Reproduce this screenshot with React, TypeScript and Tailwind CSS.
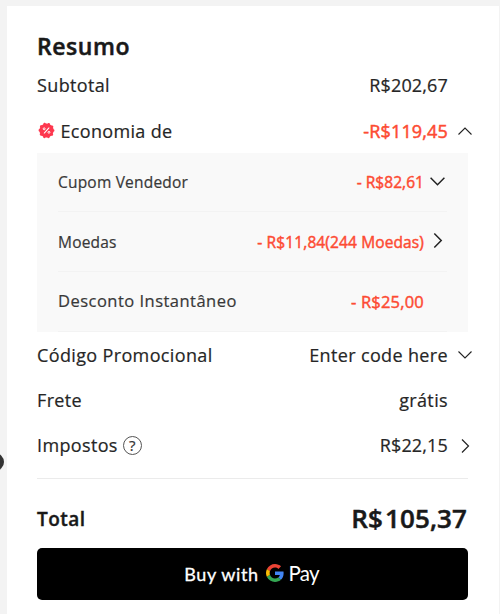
import { useState } from "react";
import clsx from "clsx";

type Direction = "up" | "down" | "right";

const paths: Record<Direction, string> = {
  up: "M1.5 11.5 8 5l6.5 6.5",
  down: "M1.5 4.5 8 11l6.5-6.5",
  right: "M5 1.5 11.5 8 5 14.5",
};

function Chevron({ dir, className }: { dir: Direction; className?: string }) {
  return (
    <svg viewBox="0 0 16 16" fill="none" stroke="#222" className={clsx("shrink-0", className)}>
      <path d={paths[dir]} />
    </svg>
  );
}

/* ── ICONS ── */
function PercentBadge() {
  return (
    <svg width="17" height="17" viewBox="0 0 16 16" className="mb-[1px] ml-[1px] shrink-0">
      <circle cx="8" cy="8" r="6.7" fill="#fd384f" />
      <circle cx="8" cy="8" r="6.3" fill="none" stroke="#fd384f" strokeWidth="2.4" strokeDasharray="0.01 3.948" strokeLinecap="round" />
      <path d="M10.3 5.6 5.9 10.4" stroke="#fff" strokeWidth="1" strokeLinecap="round" />
      <circle cx="5.8" cy="6.4" r="0.9" fill="none" stroke="#fff" strokeWidth="0.9" />
      <circle cx="10.3" cy="9.7" r="0.9" fill="none" stroke="#fff" strokeWidth="0.9" />
    </svg>
  );
}

function HelpIcon() {
  return (
    <span className="ml-[5px] flex size-[19px] items-center justify-center rounded-full border border-[#555] text-[15px] leading-none tracking-normal text-[#333]">
      ?
    </span>
  );
}

function GoogleLogo() {
  return (
    <svg width="18" height="18" viewBox="0 0 48 48" className="shrink-0">
      <path fill="#EA4335" d="M24 9.5c3.54 0 6.71 1.22 9.21 3.6l6.85-6.85C35.9 2.38 30.47 0 24 0 14.62 0 6.51 5.38 2.56 13.22l7.98 6.19C12.43 13.72 17.74 9.5 24 9.5z" />
      <path fill="#4285F4" d="M46.98 24.55c0-1.57-.15-3.09-.38-4.55H24v9.02h12.94c-.58 2.96-2.26 5.48-4.78 7.18l7.73 6c4.51-4.18 7.09-10.36 7.09-17.65z" />
      <path fill="#FBBC05" d="M10.53 28.59c-.48-1.45-.76-2.99-.76-4.59s.27-3.14.76-4.59l-7.98-6.19C.92 16.46 0 20.12 0 24c0 3.88.92 7.54 2.56 10.78l7.97-6.19z" />
      <path fill="#34A853" d="M24 48c6.48 0 11.93-2.13 15.89-5.81l-7.73-6c-2.15 1.45-4.92 2.3-8.16 2.3-6.26 0-11.57-4.22-13.47-9.91l-7.98 6.19C6.51 42.62 14.62 48 24 48z" />
    </svg>
  );
}

/* ── SAVINGS BREAKDOWN ── */
function Savings() {
  return (
    <div className="h-[179px] bg-[#f9f9f9] pr-[21px] pl-[21px] text-[#383838]">
      <div className="flex h-[59px] items-center border-b border-[#f3f3f3]">
        <span className="pt-[1px] text-[15.5px] tracking-[0.2px]">Cupom Vendedor</span>
        <span className="ml-auto pt-[1px] text-[15.5px] tracking-[0.05px] text-[#fd4b33] [-webkit-text-stroke:0.45px]">- R$82,61</span>
        <Chevron dir="down" className="mr-[1px] mb-[2px] ml-[5px] size-[17px] stroke-[1.4]" />
      </div>
      <div className="flex h-[60px] items-center border-b border-[#f3f3f3]">
        <span className="pt-[2px] text-[15.5px] tracking-[0.2px]">Moedas</span>
        <span className="ml-auto pt-[2px] text-[15.5px] tracking-[0.12px] text-[#fd4b33] [-webkit-text-stroke:0.45px]">- R$11,84(244 Moedas)</span>
        <Chevron dir="right" className="mr-[1px] mb-[3px] ml-[5px] size-[17px] stroke-[1.4]" />
      </div>
      <div className="flex h-[60px] items-center border-b border-[#f3f3f3]">
        <span className="text-[16.5px] tracking-[0.48px]">Desconto Instantâneo</span>
        <span className="mr-[23px] ml-auto pt-[2px] text-[16.5px] tracking-[0.2px] text-[#fd4b33] [-webkit-text-stroke:0.45px]">- R$25,00</span>
      </div>
    </div>
  );
}

export default function App() {
  const [open, setOpen] = useState(true);

  return (
    <div className="relative h-[614px] w-[500px] overflow-hidden bg-[#f3f3f3] pt-[6px] pr-[1px] pl-[7px] font-['Open_Sans',sans-serif] text-[#262626]">
      <div className="absolute top-[453px] -left-[14px] size-[18px] rounded-full bg-[#333]" />
      <div className="h-full bg-white pt-[18px] pr-[31px] pl-[30px] tracking-[0.36px] [-webkit-text-stroke:0.2px]">
        <h2 className="flex h-[39px] items-center pt-[6px] text-[23px] font-semibold tracking-[0.55px] text-[#191919] [-webkit-text-stroke:0.5px]">Resumo</h2>
        <div className="flex h-[45px] items-center text-[18px]">
          <span>Subtotal</span>
          <span className="mr-[20px] ml-auto tracking-[0.15px]">R$202,67</span>
        </div>
        <button onClick={() => setOpen(!open)} className="flex h-[45px] w-full items-center pt-[1px] text-[18px] tracking-[0.33px]">
          <PercentBadge />
          <span className="ml-[5.5px]">Economia de</span>
          <span className="ml-auto tracking-[0.15px] text-[#fd4b33] [-webkit-text-stroke:0.5px]">-R$119,45</span>
          <Chevron dir={open ? "up" : "down"} className="-mr-[5px] ml-[9px] size-4 stroke-[1.1]" />
        </button>
        {open && <Savings />}
        <div className="flex h-[45px] items-center pt-[1px] text-[18px]">
          <span>Código Promocional</span>
          <span className="ml-auto">Enter code here</span>
          <Chevron dir="down" className="-mr-[5px] ml-[9px] size-4 stroke-[1.1]" />
        </div>
        <div className="flex h-[46px] items-center text-[18px]">
          <span>Frete</span>
          <span className="mr-[20px] ml-auto">grátis</span>
        </div>
        <div className="flex h-[45px] items-center text-[18px]">
          <span>Impostos</span>
          <HelpIcon />
          <span className="ml-auto tracking-[0.15px]">R$22,15</span>
          <Chevron dir="right" className="-mr-[5px] ml-[9px] size-4 stroke-[1.2]" />
        </div>
        <div className="mt-[10px] flex h-[70px] items-center border-t border-[#ebebeb] pt-[10px] font-semibold text-[#191919] [-webkit-text-stroke:0.4px]">
          <span className="pt-[1px] text-[19px] tracking-[0.5px]">Total</span>
          <span className="mr-[1px] ml-auto flex text-[26px] tracking-[0.1px] [-webkit-text-stroke:0.5px]">
            <span className="mr-[2px]">R$</span>
            <span>105,37</span>
          </span>
        </div>
        <button className="flex h-[52px] w-full items-center justify-center rounded-[5px] bg-black pr-[2px] font-['Lato',sans-serif] text-white">
          <span className="text-[18px] tracking-[0.6px] [-webkit-text-stroke:0.3px]">Buy with</span>
          <span className="mb-[2px] ml-[7px] flex items-center">
            <GoogleLogo />
            <span className="ml-[5px] text-[20.5px] tracking-[-0.8px] [-webkit-text-stroke:0px]">Pay</span>
          </span>
        </button>
      </div>
    </div>
  );
}
